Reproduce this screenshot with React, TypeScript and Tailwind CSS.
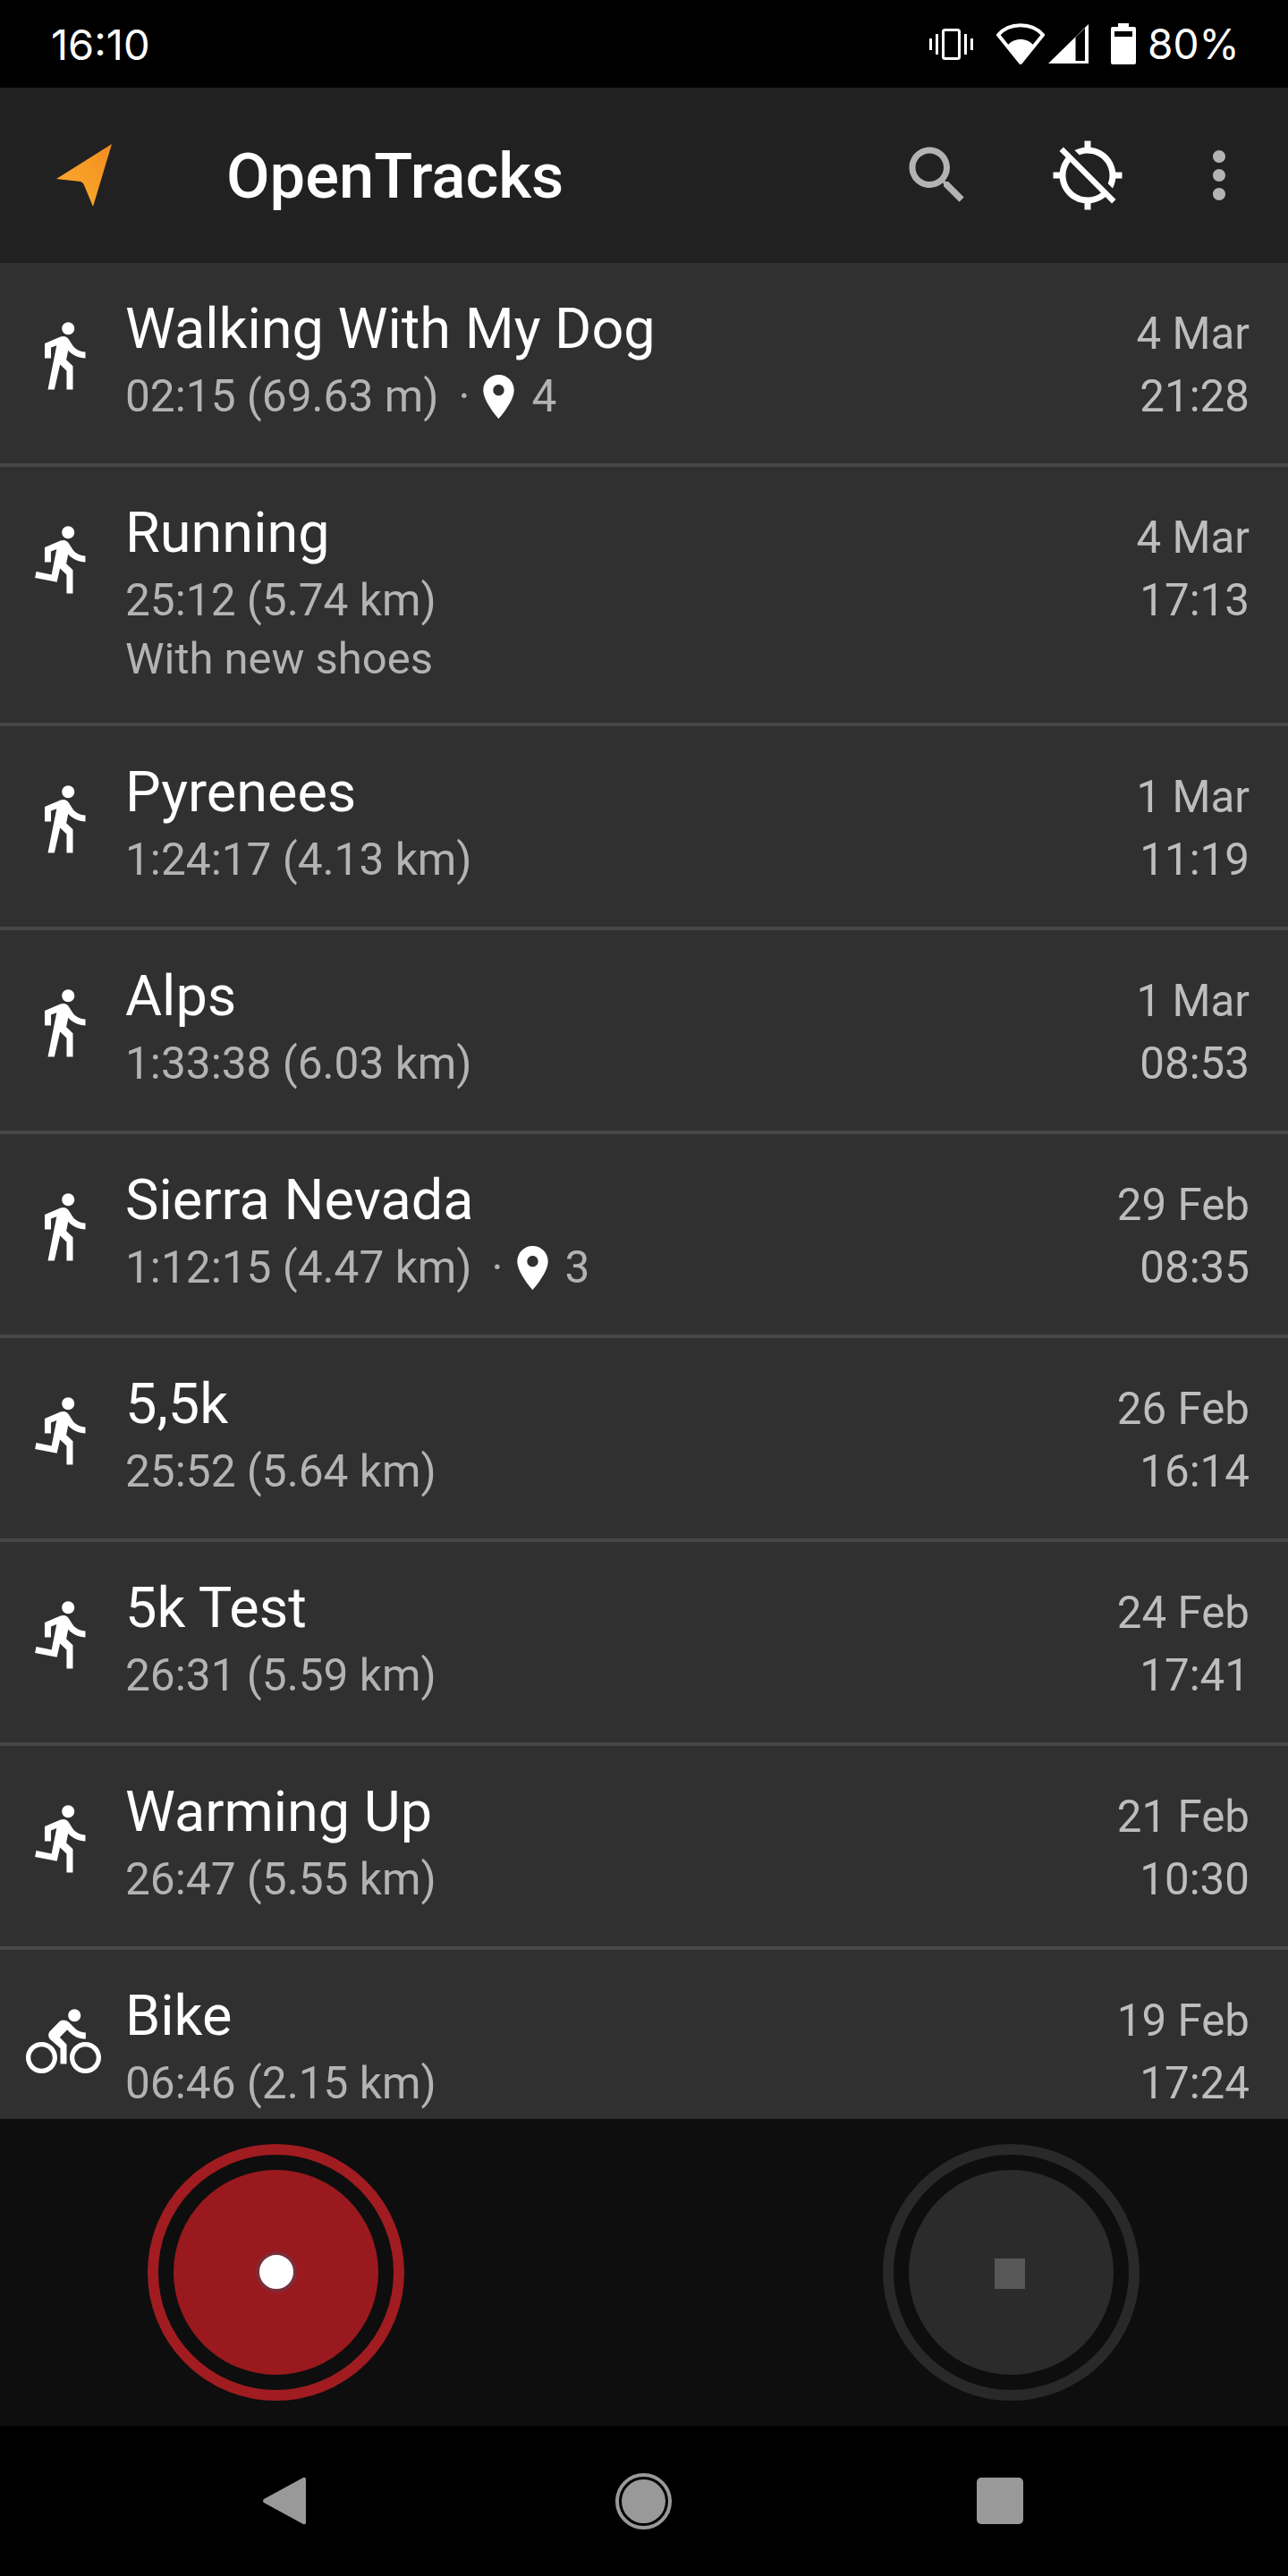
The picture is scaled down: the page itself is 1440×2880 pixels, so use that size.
import React from "react";

const WALK = "M13.5 5.5c1.1 0 2-.9 2-2s-.9-2-2-2-2 .9-2 2 .9 2 2 2zM9.8 8.9L7 23h2.1l1.8-8 2.1 2v6h2v-7.5l-2.1-2 .6-3C14.8 12 16.8 13 19 13v-2c-1.9 0-3.5-1-4.3-2.4l-1-1.6c-.4-.6-1-1-1.7-1-.3 0-.5.1-.8.1L6 8.3V13h2V9.6l1.8-.7";
const RUN = "M13.49 5.48c1.1 0 2-.9 2-2s-.9-2-2-2-2 .9-2 2 .9 2 2 2zm-3.6 13.9l1-4.4 2.1 2v6h2v-7.5l-2.1-2 .6-3c1.3 1.5 3.3 2.5 5.5 2.5v-2c-1.9 0-3.5-1-4.3-2.4l-1-1.6c-.4-.6-1-1-1.7-1-.3 0-.5.1-.8.1l-5.2 2.2v4.7h2v-3.4l1.8-.7-1.6 8.1-4.9-1-.4 2 7 1.4z";
const BIKE = "M15.5 5.5c1.1 0 2-.9 2-2s-.9-2-2-2-2 .9-2 2 .9 2 2 2zM5 12c-2.8 0-5 2.2-5 5s2.2 5 5 5 5-2.2 5-5-2.2-5-5-5zm0 8.5c-1.9 0-3.5-1.6-3.5-3.5s1.6-3.5 3.5-3.5 3.5 1.6 3.5 3.5-1.6 3.5-3.5 3.5zm5.8-10l2.4-2.4.8.8c1.3 1.3 3 2.1 5.1 2.1V9c-1.5 0-2.7-.6-3.6-1.5l-1.9-1.9c-.5-.4-1-.6-1.6-.6s-1.1.2-1.4.6L7.8 8.4c-.4.4-.6.9-.6 1.4 0 .6.2 1.1.6 1.4L11 14v5h2v-6.2l-2.2-2.3zM19 12c-2.8 0-5 2.2-5 5s2.2 5 5 5 5-2.2 5-5-2.2-5-5-5zm0 8.5c-1.9 0-3.5-1.6-3.5-3.5s1.6-3.5 3.5-3.5 3.5 1.6 3.5 3.5-1.6 3.5-3.5 3.5z";
const PLACE = "M12 2C8.13 2 5 5.13 5 9c0 5.25 7 13 7 13s7-7.75 7-13c0-3.87-3.13-7-7-7zm0 9.5c-1.38 0-2.5-1.12-2.5-2.5s1.12-2.5 2.5-2.5 2.5 1.12 2.5 2.5-1.12 2.5-2.5 2.5z";
const SEARCH = "M15.5 14h-.79l-.28-.27C15.41 12.59 16 11.11 16 9.5 16 5.91 13.09 3 9.5 3S3 5.91 3 9.5 5.91 16 9.5 16c1.61 0 3.09-.59 4.23-1.57l.27.28v.79l5 4.99L20.49 19l-4.99-5zm-6 0C7.01 14 5 11.99 5 9.5S7.01 5 9.5 5 14 7.01 14 9.5 11.99 14 9.5 14z";
const GPS_OFF = "M20.94 11c-.46-4.17-3.77-7.48-7.94-7.94V1h-2v2.06c-1.13.12-2.19.46-3.16.97l1.5 1.5C10.16 5.19 11.06 5 12 5c3.87 0 7 3.13 7 7 0 .94-.19 1.84-.52 2.65l1.5 1.5c.5-.96.84-2.02.97-3.15H23v-2h-2.06zM3 4.27l2.04 2.04C3.97 7.62 3.25 9.23 3.06 11H1v2h2.06c.46 4.17 3.77 7.48 7.94 7.94V23h2v-2.06c1.77-.2 3.38-.91 4.69-1.98L19.73 21 21 19.73 4.27 3 3 4.27zm13.27 13.27C15.09 18.45 13.61 19 12 19c-3.87 0-7-3.13-7-7 0-1.61.55-3.09 1.46-4.27l9.81 9.81z";
const MORE = "M12 8c1.1 0 2-.9 2-2s-.9-2-2-2-2 .9-2 2 .9 2 2 2zm0 2c-1.1 0-2 .9-2 2s.9 2 2 2 2-.9 2-2-.9-2-2-2zm0 6c-1.1 0-2 .9-2 2s.9 2 2 2 2-.9 2-2-.9-2-2-2z";

function Mi({ d, className }: { d: string; className: string }) {
  return (
    <svg viewBox="0 0 24 24" fill="currentColor" className={className}>
      <path d={d} />
    </svg>
  );
}

type Track = {
  icon: string;
  title: string;
  sub: string;
  markers?: string;
  note?: string;
  date: string;
  time: string;
};

const tracks: Track[] = [
  { icon: WALK, title: "Walking With My Dog", sub: "02:15 (69.63 m)", markers: "4", date: "4 Mar", time: "21:28" },
  { icon: RUN, title: "Running", sub: "25:12 (5.74 km)", note: "With new shoes", date: "4 Mar", time: "17:13" },
  { icon: WALK, title: "Pyrenees", sub: "1:24:17 (4.13 km)", date: "1 Mar", time: "11:19" },
  { icon: WALK, title: "Alps", sub: "1:33:38 (6.03 km)", date: "1 Mar", time: "08:53" },
  { icon: WALK, title: "Sierra Nevada", sub: "1:12:15 (4.47 km)", markers: "3", date: "29 Feb", time: "08:35" },
  { icon: RUN, title: "5,5k", sub: "25:52 (5.64 km)", date: "26 Feb", time: "16:14" },
  { icon: RUN, title: "5k Test", sub: "26:31 (5.59 km)", date: "24 Feb", time: "17:41" },
  { icon: RUN, title: "Warming Up", sub: "26:47 (5.55 km)", date: "21 Feb", time: "10:30" },
  { icon: BIKE, title: "Bike", sub: "06:46 (2.15 km)", date: "19 Feb", time: "17:24" },
];

function Row({ t }: { t: Track }) {
  return (
    <div className={`flex items-start bg-[#303030] border-b-4 border-[#474747] ${t.note ? "h-[290px]" : "h-[228px]"}`}>
      <div className="w-[140px] shrink-0 pl-[29px] pt-[61px]">
        <Mi d={t.icon} className="w-[84px] h-[84px] text-white" />
      </div>
      <div className="flex-1 min-w-0 pt-[34px]">
        <div className="text-[63px] leading-[80px] text-white whitespace-nowrap">{t.title}</div>
        <div className="mt-[2px] flex items-center h-[66px] text-[49.6px] leading-[66px] text-[#b3b3b3] whitespace-nowrap">
          <span>{t.sub}</span>
          {t.markers && (
            <>
              <span className="ml-[22px]">·</span>
              <Mi d={PLACE} className="ml-[3px] w-[59px] h-[59px] text-white" />
              <span className="ml-[7px]">{t.markers}</span>
            </>
          )}
        </div>
        {t.note && <div className="text-[49px] leading-[66px] text-[#b3b3b3] whitespace-nowrap">{t.note}</div>}
      </div>
      <div className="shrink-0 pr-[43px] pt-[44px] text-right text-[49.3px] leading-[70px] text-[#bdbdbd]">
        <div>{t.date}</div>
        <div>{t.time}</div>
      </div>
    </div>
  );
}

function StatusIcons() {
  return (
    <div className="flex items-center text-white">
      <svg viewBox="0 0 49 35" className="w-[49px] h-[35px]" fill="none">
        <path d="M0 11h3v13H0zM7 6h3v23H7zM39 6h3v23h-3zM46 11h3v13h-3z" fill="#fff" />
        <rect x="15.5" y="1.5" width="18" height="32" rx="2" stroke="#fff" strokeWidth="3" />
      </svg>
      <svg viewBox="0 0 54 46" className="ml-[26px] w-[54px] h-[46px]">
        <path d="M27 44 L2 13 C8 6 17 2.2 27 2.2 C37 2.2 46 6 52 13 Z" fill="none" stroke="#fff" strokeWidth="4" strokeLinejoin="round" />
        <path d="M27 44 L12 25 C16 20.5 21 18 27 18 C33 18 38 20.5 42 25 Z" fill="#fff" />
      </svg>
      <svg viewBox="0 0 45 44" className="ml-[4px] w-[45px] h-[44px]">
        <path d="M45 0 V44 H0 Z" fill="#fff" />
        <path d="M30.5 14.5 L41 4.5 V41 H30.5 Z" fill="#000" />
      </svg>
      <svg viewBox="0 0 28 46" className="ml-[25px] w-[28px] h-[46px]">
        <path d="M8 0h12v4h6a2 2 0 0 1 2 2v38a2 2 0 0 1-2 2H2a2 2 0 0 1-2-2V6a2 2 0 0 1 2-2h6z" fill="#fff" />
        <rect x="4" y="9" width="20" height="6" fill="#000" />
      </svg>
      <span className="ml-[13px] w-[97px] text-[46px] leading-[46px] font-[Inter,sans-serif] whitespace-nowrap">80%</span>
    </div>
  );
}

function RoundButton({ ring, fill, children }: { ring: string; fill: string; children: React.ReactNode }) {
  return (
    <div className={`w-[287px] h-[287px] rounded-full border-[12px] flex items-center justify-center ${ring}`}>
      <div className={`w-[229px] h-[229px] rounded-full flex items-center justify-center ${fill}`}>{children}</div>
    </div>
  );
}

export default function App() {
  return (
    <div className="w-[1440px] h-[2880px] flex flex-col overflow-hidden bg-black font-[Roboto,sans-serif]">
      <div className="h-[98px] shrink-0 bg-black flex items-center justify-between pl-[57px] pr-[60px] text-white">
        <span className="text-[47px] leading-[47px] font-[Inter,sans-serif]">16:10</span>
        <StatusIcons />
      </div>

      <div className="h-[196px] shrink-0 bg-[#212121] flex items-center pr-[35px]">
        <svg viewBox="0 0 62 70" className="ml-[63px] w-[62px] h-[70px]">
          <defs>
            <linearGradient id="logo" x1="1" y1="0" x2="0" y2="1">
              <stop offset="0" stopColor="#f28c1e" />
              <stop offset="1" stopColor="#fcae2f" />
            </linearGradient>
          </defs>
          <path d="M62 0 L0 39 L27 42 Q30 43 31 46 L41 70 Z" fill="url(#logo)" />
        </svg>
        <div className="ml-[128px] flex-1 pt-[2px] text-[70.5px] leading-[82px] font-medium text-white">OpenTracks</div>
        <Mi d={SEARCH} className="w-[84px] h-[84px] text-[#b3b3b3]" />
        <Mi d={GPS_OFF} className="ml-[84px] w-[84px] h-[84px] text-white" />
        <Mi d={MORE} className="ml-[63px] w-[84px] h-[84px] text-[#b3b3b3]" />
      </div>

      <div className="flex-1 min-h-0 overflow-hidden bg-[#303030]">
        {tracks.map((t) => (
          <Row key={t.title} t={t} />
        ))}
      </div>

      <div className="h-[343px] shrink-0 bg-[#0e0e0e] flex items-center justify-between pl-[165px] pr-[166px]">
        <RoundButton ring="border-[#a01c20]" fill="bg-[#9a191e]">
          <div className="w-[46px] h-[46px] mb-[2px] rounded-full bg-white border-[4px] border-[#7c2c38]" />
        </RoundButton>
        <RoundButton ring="border-[#292929]" fill="bg-[#2b2b2b]">
          <div className="w-[34px] h-[34px] mr-[4px] mt-[3px] bg-[#575757]" />
        </RoundButton>
      </div>

      <div className="h-[168px] shrink-0 bg-black flex items-center">
        <svg viewBox="0 0 49 56" className="ml-[293px] w-[49px] h-[56px]">
          <path d="M46 2 L2 26 Q0 28 2 30 L46 54 Q49 55 49 52 V4 Q49 1 46 2 Z" fill="#999" />
        </svg>
        <div className="ml-[346px] w-[63px] h-[63px] rounded-full border-[4px] border-[#999] flex items-center justify-center">
          <div className="w-[49px] h-[49px] rounded-full bg-[#999]" />
        </div>
        <div className="ml-[341px] w-[52px] h-[52px] rounded-[5px] bg-[#999]" />
      </div>
    </div>
  );
}
